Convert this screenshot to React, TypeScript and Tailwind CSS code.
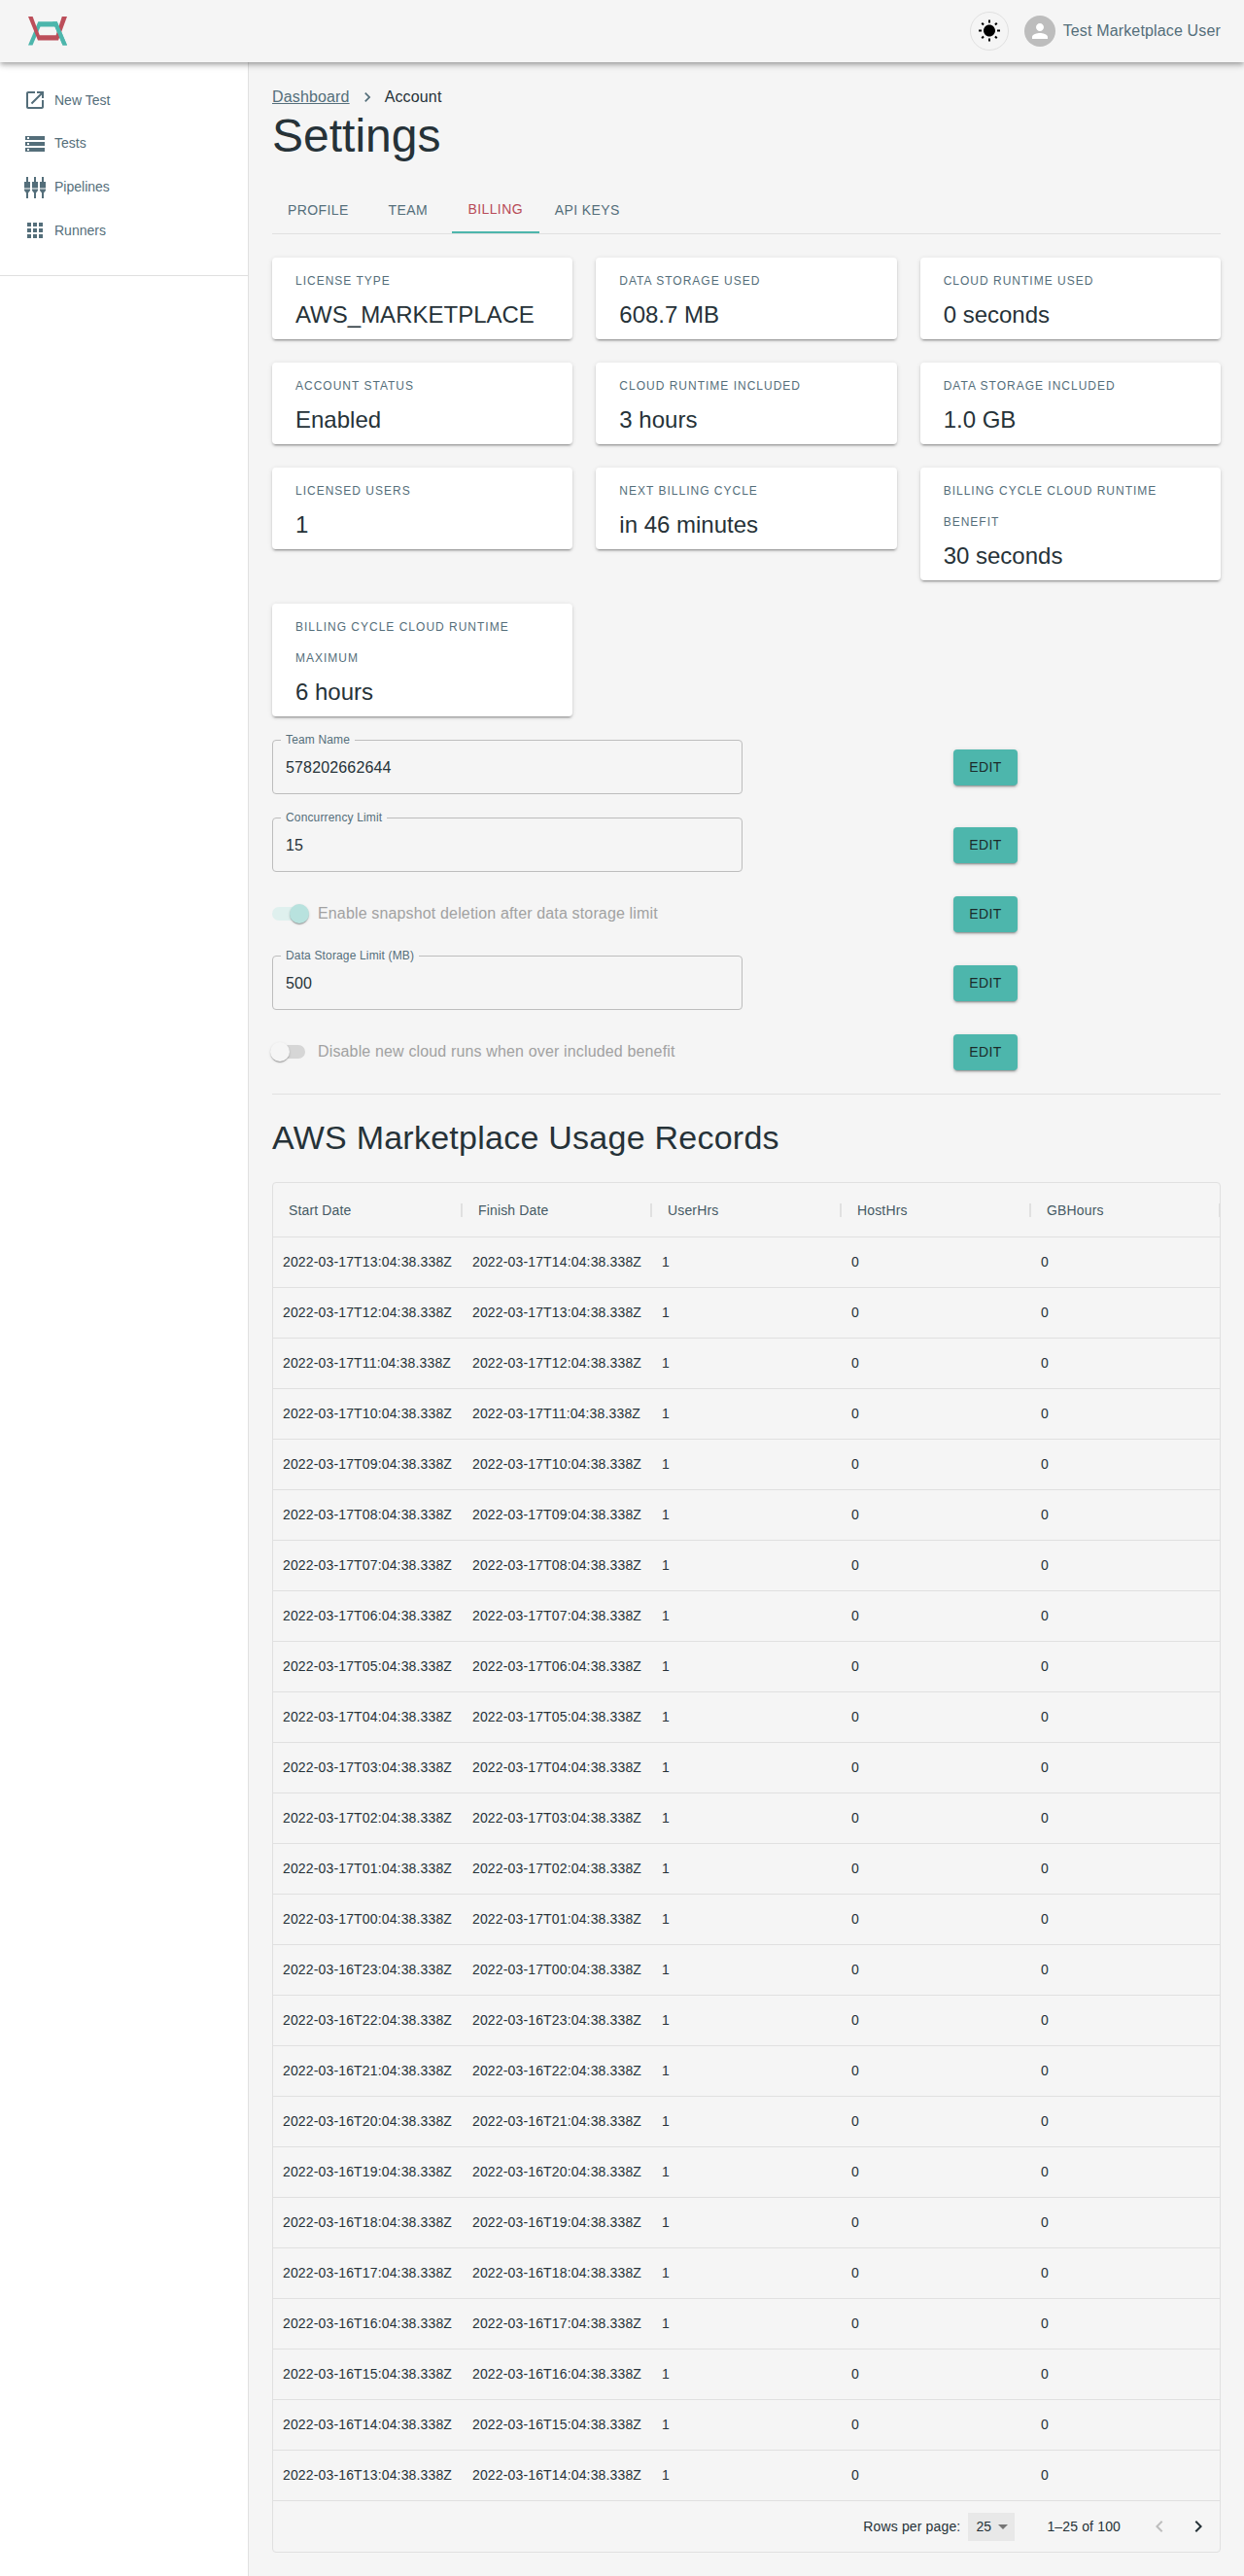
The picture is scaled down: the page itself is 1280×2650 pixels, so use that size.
import React from "react";

const CARD_ITEMS: [string, string][] = [
  ["License Type", "AWS_MARKETPLACE"],
  ["Data Storage Used", "608.7 MB"],
  ["Cloud Runtime Used", "0 seconds"],
  ["Account Status", "Enabled"],
  ["Cloud Runtime Included", "3 hours"],
  ["Data Storage Included", "1.0 GB"],
  ["Licensed Users", "1"],
  ["Next Billing Cycle", "in 46 minutes"],
  ["Billing Cycle Cloud Runtime Benefit", "30 seconds"],
  ["Billing Cycle Cloud Runtime Maximum", "6 hours"],
];

const COLUMNS = ["Start Date", "Finish Date", "UserHrs", "HostHrs", "GBHours"];

const BASE = Date.UTC(2022, 2, 17, 13, 4, 38, 338);
const ROWS = Array.from({ length: 25 }, (_, i) => ({
  start: new Date(BASE - i * 3600000).toISOString(),
  finish: new Date(BASE - (i - 1) * 3600000).toISOString(),
}));

function Icon({ d, className }: { d: string; className: string }) {
  return (
    <svg viewBox="0 0 24 24" className={className} fill="currentColor" aria-hidden="true">
      <path d={d} />
    </svg>
  );
}

function PipelinesIcon() {
  const columns = [1, 9, 17];
  return (
    <svg viewBox="0 0 24 24" className="w-6 h-6 shrink-0" fill="currentColor" aria-hidden="true">
      {columns.map((x) => (
        <g key={x}>
          <rect x={x + 2} y={1} width={2} height={6} />
          <rect x={x} y={6} width={6} height={6.5} />
          <polygon points={`${x},13.5 ${x + 6},13.5 ${x + 6},15 ${x + 4},17.5 ${x + 2},17.5 ${x},15`} />
          <rect x={x + 2} y={17} width={2} height={6} />
        </g>
      ))}
    </svg>
  );
}

function NavItem({ icon, label }: { icon: React.ReactNode; label: string }) {
  return (
    <div className="h-[44.67px] flex items-center pl-6 gap-2 text-[14px] text-[#546e7a]">
      {icon}
      <span>{label}</span>
    </div>
  );
}

function StatCard({ label, value }: { label: string; value: string }) {
  return (
    <div className="bg-white rounded-[4px] pt-2 pb-[9px] px-6 shadow-[0px_3px_1px_-2px_rgba(0,0,0,0.2),0px_2px_2px_0px_rgba(0,0,0,0.14),0px_1px_5px_0px_rgba(0,0,0,0.12)]">
      <div className="text-[12px] leading-8 tracking-[1px] uppercase text-[#546e7a]">{label}</div>
      <div className="mt-[3px] text-[24px] leading-8 text-[#263238]">{value}</div>
    </div>
  );
}

function EditButton() {
  return (
    <button className="w-[66px] h-[37px] rounded-[4px] bg-[#4db6ac] text-[14px] tracking-[0.4px] text-[#1b2a2a] shadow-[0px_3px_1px_-2px_rgba(0,0,0,0.2),0px_2px_2px_0px_rgba(0,0,0,0.14),0px_1px_5px_0px_rgba(0,0,0,0.12)]">
      EDIT
    </button>
  );
}

function FieldRow({ label, value }: { label: string; value: string }) {
  return (
    <div className="flex items-center">
      <div className="w-[701px] shrink-0">
        <div className="relative w-[484px] h-[56px] border border-[#bdbdbd] rounded-[4px] flex items-center pl-[13px] pt-[2px] text-[16px] tracking-[0.15px] text-[#263238]">
          <span className="absolute -top-[8px] left-[8px] px-[5px] bg-[#f5f5f5] text-[12px] leading-[14px] text-[#546e7a]">
            {label}
          </span>
          {value}
        </div>
      </div>
      <EditButton />
    </div>
  );
}

function SwitchRow({ label, on }: { label: string; on: boolean }) {
  return (
    <div className="flex items-center h-[38px]">
      <div className="w-[701px] shrink-0 flex items-center">
        <div className="relative w-[47px] h-[20px] shrink-0">
          <div
            className={
              on
                ? "absolute left-0 top-[3px] w-[34px] h-[14px] rounded-full bg-[#dff0ee]"
                : "absolute left-0 top-[3px] w-[34px] h-[14px] rounded-full bg-[#d6d6d6]"
            }
          />
          <div
            className={
              on
                ? "absolute left-[18px] top-0 w-[20px] h-[20px] rounded-full bg-[#b8e2de] shadow-[0px_2px_1px_-1px_rgba(0,0,0,0.2),0px_1px_1px_0px_rgba(0,0,0,0.14),0px_1px_3px_0px_rgba(0,0,0,0.12)]"
                : "absolute -left-[2px] top-0 w-[20px] h-[20px] rounded-full bg-[#f5f5f5] shadow-[0px_2px_1px_-1px_rgba(0,0,0,0.2),0px_1px_1px_0px_rgba(0,0,0,0.14),0px_1px_3px_0px_rgba(0,0,0,0.12)]"
            }
          />
        </div>
        <span className="text-[16px] tracking-[0.15px] text-[#a1a1a1]">{label}</span>
      </div>
      <EditButton />
    </div>
  );
}

function Logo() {
  return (
    <svg viewBox="0 0 40 30" className="w-10 h-[30px]" aria-hidden="true">
      <path d="M10.3 5.3H29.7L40 29.5H35.5L27.5 10.5H12.5L4.5 29.5H0Z" fill="#4db6ac" />
      <path d="M0 0H4.6L11.8 19.3H28.6L34.8 0H40L31 24.4H10Z" fill="#bc4e5a" />
      <path d="M27.5 5.3H29.7L40 29.5H35.5L25.2 5.3Z" fill="#4db6ac" />
    </svg>
  );
}

export default function App() {
  return (
    <div className="min-h-[2650px] flex flex-col bg-[#f5f5f5] font-['Liberation_Sans',Arial,sans-serif]">
      <header className="relative z-10 h-16 shrink-0 bg-[#f5f5f5] flex items-center justify-between pl-[29px] pr-6 shadow-[0px_2px_4px_-1px_rgba(0,0,0,0.2),0px_4px_5px_0px_rgba(0,0,0,0.14),0px_1px_10px_0px_rgba(0,0,0,0.12)]">
        <Logo />
        <div className="flex items-center">
          <div className="w-10 h-10 rounded-full border border-[#e0e0e0] flex items-center justify-center text-black">
            <Icon
              className="w-6 h-6"
              d="M6.76 4.84l-1.8-1.79-1.41 1.41 1.79 1.79 1.42-1.41zM4 10.5H1v2h3v-2zm9-9.95h-2V3.5h2V.55zm7.45 3.91l-1.41-1.41-1.79 1.79 1.41 1.41 1.79-1.79zm-3.21 13.7l1.79 1.8 1.41-1.41-1.8-1.79-1.4 1.4zM20 10.5v2h3v-2h-3zm-8-5c-3.31 0-6 2.69-6 6s2.69 6 6 6 6-2.69 6-6-2.69-6-6-6zm-1 16.95h2V19.5h-2v2.95zm-7.45-3.91l1.41 1.41 1.79-1.8-1.41-1.41-1.79 1.8z"
            />
          </div>
          <div className="w-8 h-8 ml-4 rounded-full bg-[#bdbdbd] flex items-center justify-center text-white">
            <Icon
              className="w-6 h-6"
              d="M12 12c2.21 0 4-1.79 4-4s-1.79-4-4-4-4 1.79-4 4 1.79 4 4 4zm0 2c-2.67 0-8 1.34-8 4v2h16v-2c0-2.66-5.33-4-8-4z"
            />
          </div>
          <span className="ml-2 text-[16px] tracking-[0.15px] text-[#546e7a]">Test Marketplace User</span>
        </div>
      </header>

      <div className="flex flex-1">
        <aside className="w-64 shrink-0 bg-white border-r border-[#e0e0e0]">
          <nav className="pt-[17px] pb-[23.3px] border-b border-[#e0e0e0]">
            <NavItem
              label="New Test"
              icon={
                <Icon
                  className="w-6 h-6 shrink-0"
                  d="M19 19H5V5h7V3H5c-1.11 0-2 .9-2 2v14c0 1.1.89 2 2 2h14c1.1 0 2-.9 2-2v-7h-2v7zM14 3v2h3.59l-9.83 9.83 1.41 1.41L19 6.41V10h2V3h-7z"
                />
              }
            />
            <NavItem
              label="Tests"
              icon={
                <Icon
                  className="w-6 h-6 shrink-0"
                  d="M2 20h20v-4H2v4zm2-3h2v2H4v-2zM2 4v4h20V4H2zm4 3H4V5h2v2zm-4 7h20v-4H2v4zm2-3h2v2H4v-2z"
                />
              }
            />
            <NavItem label="Pipelines" icon={<PipelinesIcon />} />
            <NavItem
              label="Runners"
              icon={
                <Icon
                  className="w-6 h-6 shrink-0"
                  d="M4 8h4V4H4v4zm6 12h4v-4h-4v4zm-6 0h4v-4H4v4zm0-6h4v-4H4v4zm6 0h4v-4h-4v4zm6-10v4h4V4h-4zm-6 4h4V4h-4v4zm6 6h4v-4h-4v4zm0 6h4v-4h-4v4z"
                />
              }
            />
          </nav>
        </aside>

        <main className="flex-1 min-w-0 pt-6 px-6 pb-6">
          <div className="flex items-center h-6 text-[16px] tracking-[0.15px]">
            <span className="underline text-[#546e7a]">Dashboard</span>
            <Icon className="w-5 h-5 mx-2 text-[#546e7a]" d="M10 6L8.59 7.41 13.17 12l-4.58 4.59L10 18l6-6z" />
            <span className="text-[#263238]">Account</span>
          </div>
          <h1 className="text-[48px] leading-[56px] text-[#263238]">Settings</h1>

          <div className="flex mt-6 h-[49px] border-b border-[#e0e0e0] text-[14px] tracking-[0.4px] text-[#546e7a]">
            <div className="h-[48px] flex items-center justify-center px-4">PROFILE</div>
            <div className="h-[48px] min-w-[90px] flex items-center justify-center px-4">TEAM</div>
            <div className="h-[48px] min-w-[90px] flex items-center justify-center px-4 text-[#b84b58] border-b-2 border-[#4db6ac]">
              BILLING
            </div>
            <div className="h-[48px] flex items-center justify-center px-4">API KEYS</div>
          </div>

          <div className="grid grid-cols-3 gap-6 items-start mt-6">
            {CARD_ITEMS.map(([label, value]) => (
              <StatCard key={label} label={label} value={value} />
            ))}
          </div>

          <div className="flex flex-col gap-6 mt-6">
            <FieldRow label="Team Name" value="578202662644" />
            <FieldRow label="Concurrency Limit" value="15" />
            <SwitchRow label="Enable snapshot deletion after data storage limit" on />
            <FieldRow label="Data Storage Limit (MB)" value="500" />
            <SwitchRow label="Disable new cloud runs when over included benefit" on={false} />
            <div className="h-px bg-[#e0e0e0]" />
          </div>

          <h2 className="mt-[23px] text-[34px] leading-[42px] tracking-[0.25px] text-[#263238]">
            AWS Marketplace Usage Records
          </h2>

          <div className="mt-[25px] border border-[#e0e0e0] rounded-[4px] overflow-hidden">
            <div className="grid grid-cols-[repeat(5,195px)] h-[56px] border-b border-[#e0e0e0]">
              {COLUMNS.map((column) => (
                <div key={column} className="flex items-center justify-between pl-4 text-[14px] tracking-[0.15px] text-[#455a64]">
                  <span className="mt-[2px]">{column}</span>
                  <span className="w-[2px] h-[14px] bg-[#e0e0e0]" />
                </div>
              ))}
            </div>
            {ROWS.map((row) => (
              <div
                key={row.start}
                className="grid grid-cols-[repeat(5,195px)] h-[52px] items-center border-b border-[#e0e0e0] text-[14px] tracking-[0.15px] text-[#263238]"
              >
                <div className="pl-[10px]">{row.start}</div>
                <div className="pl-[10px]">{row.finish}</div>
                <div className="pl-[10px]">1</div>
                <div className="pl-[10px]">0</div>
                <div className="pl-[10px]">0</div>
              </div>
            ))}
            <div className="h-[52px] flex items-center justify-end pr-[2px] text-[14px] tracking-[0.15px] text-[#263238]">
              <span>Rows per page:</span>
              <div className="ml-2 w-[48px] h-[29px] bg-[#e8e8e8] flex items-center pl-2">
                <span>25</span>
                <svg viewBox="0 0 24 24" className="w-6 h-6 shrink-0 text-[#757575]" fill="currentColor" aria-hidden="true">
                  <path d="M7 10l5 5 5-5z" />
                </svg>
              </div>
              <span className="ml-[33px] mr-[20px]">1–25 of 100</span>
              <div className="w-10 h-10 flex items-center justify-center text-[#bdbdbd]">
                <Icon className="w-6 h-6" d="M15.41 16.59L10.83 12l4.58-4.59L14 6l-6 6 6 6z" />
              </div>
              <div className="w-10 h-10 flex items-center justify-center text-[#263238]">
                <Icon className="w-6 h-6" d="M8.59 16.59L13.17 12 8.59 7.41 10 6l6 6-6 6z" />
              </div>
            </div>
          </div>
        </main>
      </div>
    </div>
  );
}
